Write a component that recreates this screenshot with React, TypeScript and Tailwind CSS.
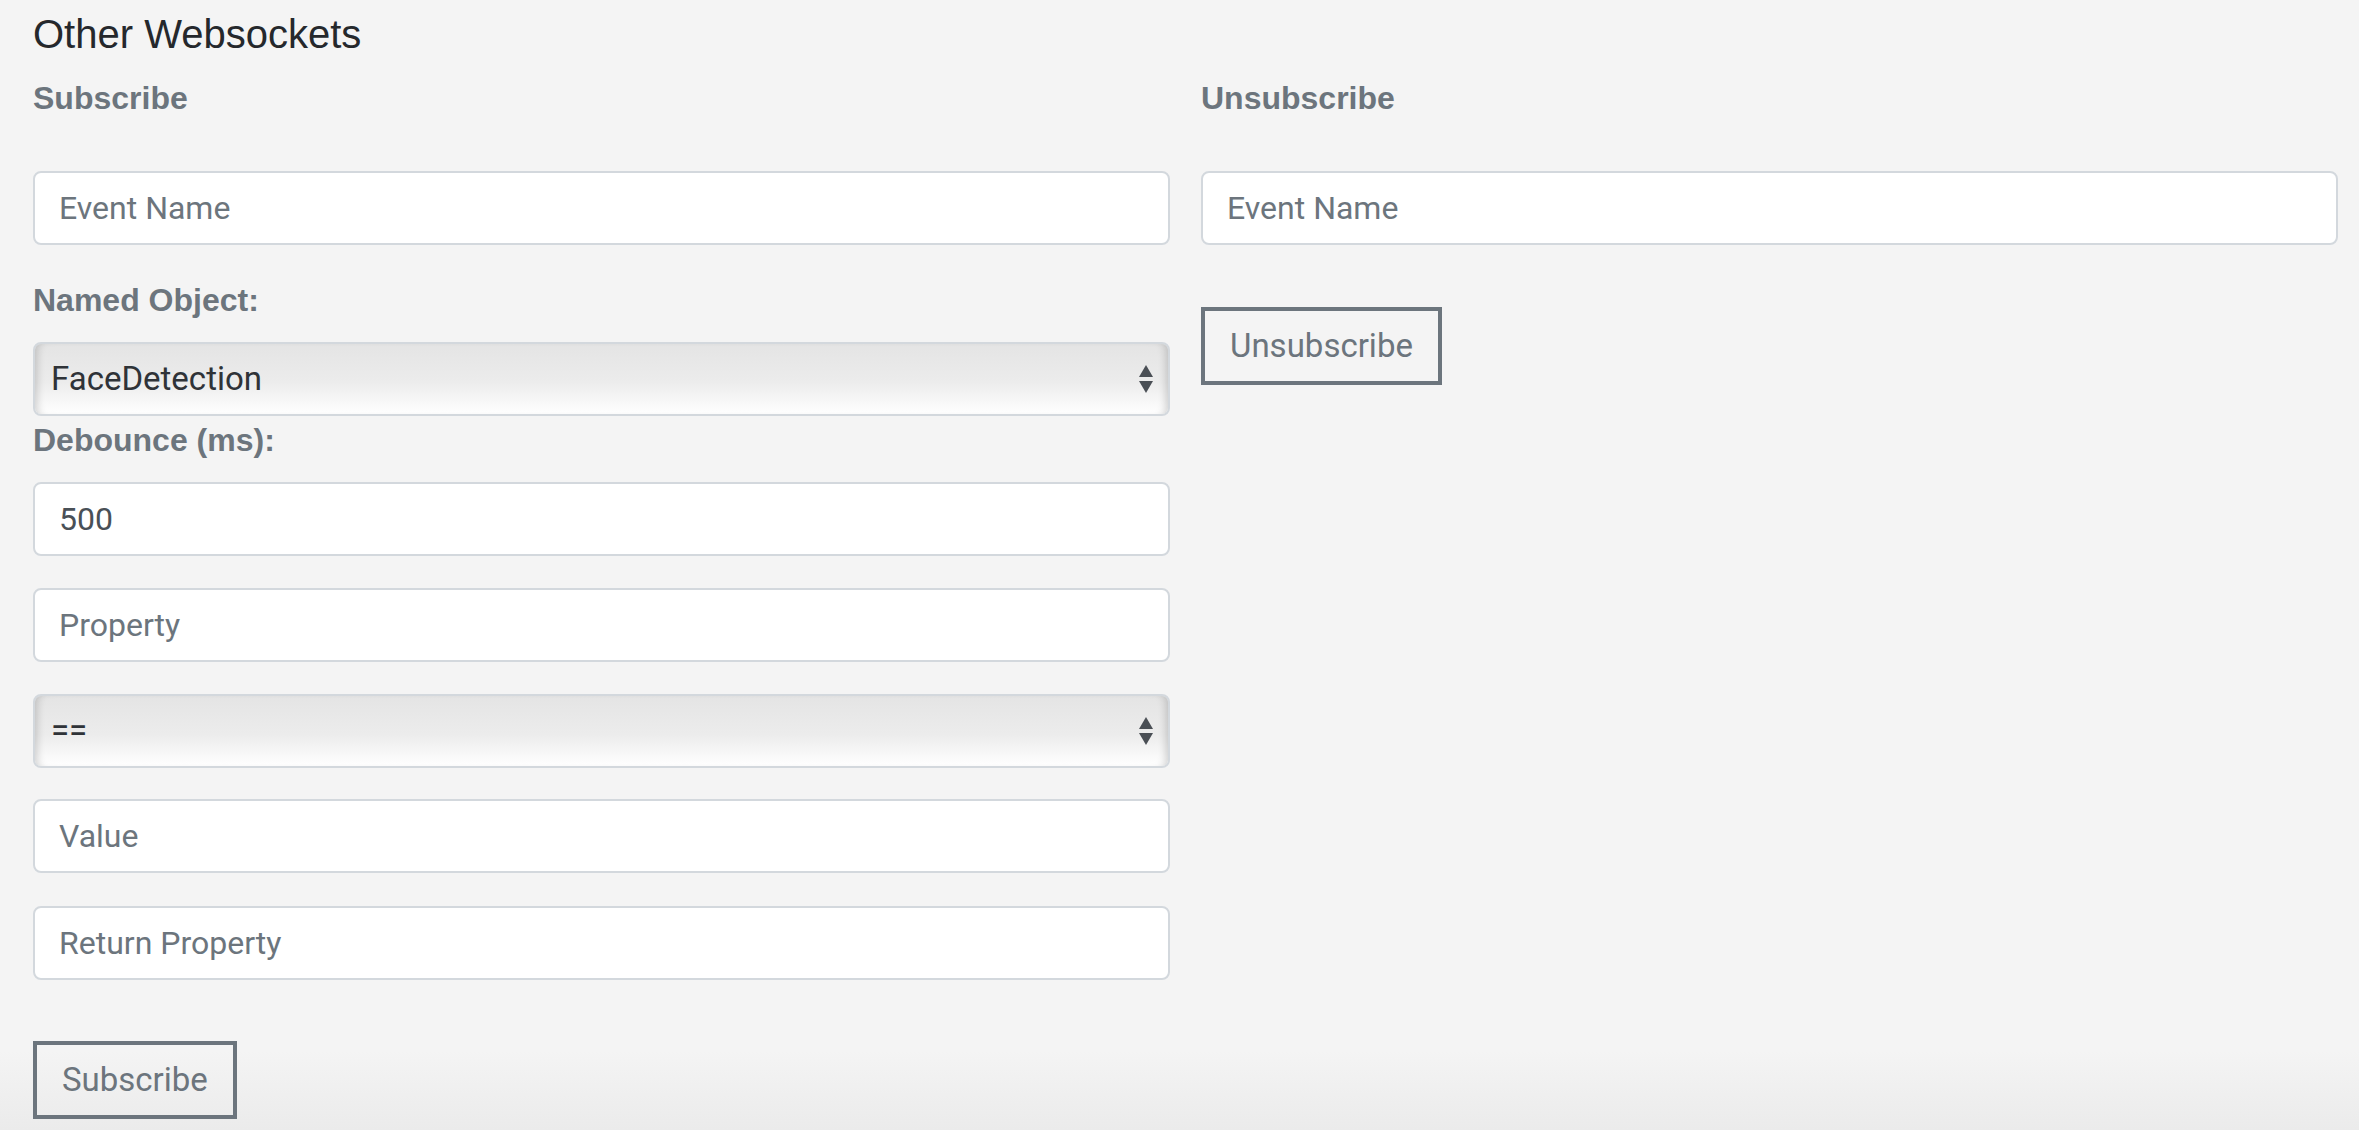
const inputCls =
  "block w-full h-[74px] rounded-[8px] border-2 border-[#d3d8dd] bg-white px-6 text-[32px] text-[#495057] placeholder:text-[#6c757d] outline-none font-['Roboto',sans-serif]";

const labelCls =
  "block text-[32px] leading-[48px] font-bold text-[#6c757d] font-['Liberation_Sans',Arial,sans-serif]";

const btnCls =
  "h-[78px] border-4 border-[#6c757d] bg-transparent px-[25px] text-[33px] text-[#6c757d] font-['Roboto',sans-serif]";

function Arrows() {
  return (
    <svg
      className="pointer-events-none absolute right-[16px] top-1/2 -translate-y-1/2"
      width="16"
      height="30"
      viewBox="0 0 16 30"
    >
      <polygon points="8,1 15,13 1,13" fill="#4a4f55" />
      <polygon points="1,17 15,17 8,29" fill="#4a4f55" />
    </svg>
  );
}

function FakeSelect({ value, options }: { value: string; options: string[] }) {
  return (
    <div className="relative">
      <select
        defaultValue={value}
        className="block w-full h-[74px] appearance-none rounded-[8px] border-2 border-[#d3d8dd] bg-[linear-gradient(#e4e4e4,#ececec_55%,#ffffff)] pl-4 pr-12 text-[33px] text-[#2f3338] shadow-[inset_8px_0_8px_-6px_rgba(0,0,0,0.18),inset_-8px_0_8px_-6px_rgba(0,0,0,0.18)] outline-none font-['Roboto',sans-serif]"
      >
        {options.map((o) => (
          <option key={o}>{o}</option>
        ))}
      </select>
      <Arrows />
    </div>
  );
}

export default function App() {
  return (
    <div className="min-h-[1130px] bg-[linear-gradient(#f4f4f4_0%,#f4f4f4_93%,#ebebeb_100%)] pl-[33px] pr-[21px] pt-[10px]">
      <h5 className="mb-4 text-[40px] leading-[48px] text-[#25282c] font-['Liberation_Sans',Arial,sans-serif]">
        Other Websockets
      </h5>
      <div className="grid grid-cols-2 gap-x-[31px]">
        <div>
          <label className={labelCls + " mb-[49px]"}>Subscribe</label>
          <input className={inputCls + " mb-[31px]"} placeholder="Event Name" />
          <label className={labelCls + " mb-[18px]"}>Named Object:</label>
          <FakeSelect value="FaceDetection" options={["FaceDetection", "ObjectDetection"]} />
          <label className={labelCls + " mb-[18px]"}>Debounce (ms):</label>
          <input className={inputCls + " mb-[32px]"} defaultValue="500" />
          <input className={inputCls + " mb-[32px]"} placeholder="Property" />
          <div className="mb-[31px]">
            <FakeSelect value="==" options={["==", "!=", ">", "<"]} />
          </div>
          <input className={inputCls + " mb-[33px]"} placeholder="Value" />
          <input className={inputCls + " mb-[61px]"} placeholder="Return Property" />
          <button className={btnCls}>Subscribe</button>
        </div>
        <div>
          <label className={labelCls + " mb-[49px]"}>Unsubscribe</label>
          <input className={inputCls + " mb-[62px]"} placeholder="Event Name" />
          <button className={btnCls}>Unsubscribe</button>
        </div>
      </div>
    </div>
  );
}
